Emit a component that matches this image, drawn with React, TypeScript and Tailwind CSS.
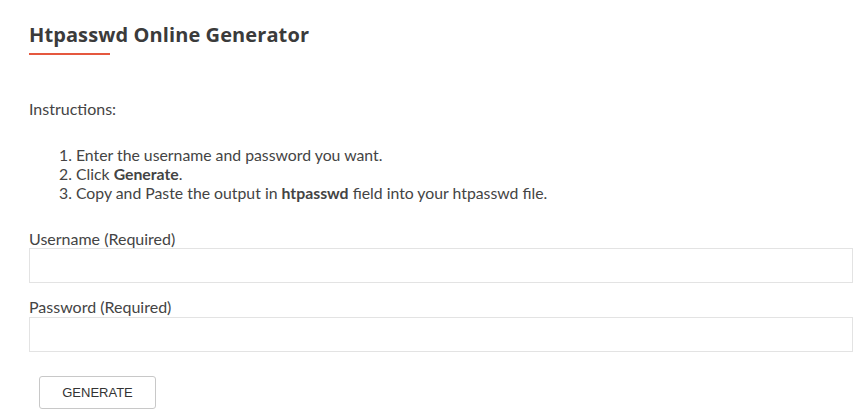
export default function App() {
  return (
    <div className="min-h-[413px] bg-white pl-[29px] pr-[13px] pt-[20px] font-['Lato',sans-serif] text-[#444]">
      <h1 className="font-['Open_Sans',sans-serif] text-[20px] font-bold leading-[30px] tracking-[0.1px] text-[#3b3b3b]">
        Htpasswd Online Generator
      </h1>
      <div className="mt-[3px] h-[2px] w-[81px] bg-[#e5583f]" />

      <p className="mt-[44px] text-[16px] leading-[19px]">Instructions:</p>

      <div className="ml-[30px] mt-[27px] text-[15.8px] leading-[19px]">
        <div>1. Enter the username and password you want.</div>
        <div>
          2. Click <b>Generate</b>.
        </div>
        <div>
          3. Copy and Paste the output in <b>htpasswd</b> field into your htpasswd file.
        </div>
      </div>

      <form className="mt-[27px] flex flex-col">
        <label className="text-[16px] leading-[19px]">Username (Required)</label>
        <input
          type="text"
          className="h-[35px] w-full border border-[#e3e3e3] bg-white px-2 outline-none"
        />
        <label className="mt-[14px] text-[16px] leading-[19px]">Password (Required)</label>
        <input
          type="password"
          className="mt-[1px] h-[35px] w-full border border-[#e3e3e3] bg-white px-2 outline-none"
        />
        <div className="mt-[24px] pl-[10px]">
          <button
            type="button"
            className="h-[33px] w-[117px] rounded-[3px] border border-[#c8c8c8] bg-white font-['Liberation_Sans',sans-serif] text-[13px] text-[#333]"
          >
            GENERATE
          </button>
        </div>
      </form>
    </div>
  );
}
